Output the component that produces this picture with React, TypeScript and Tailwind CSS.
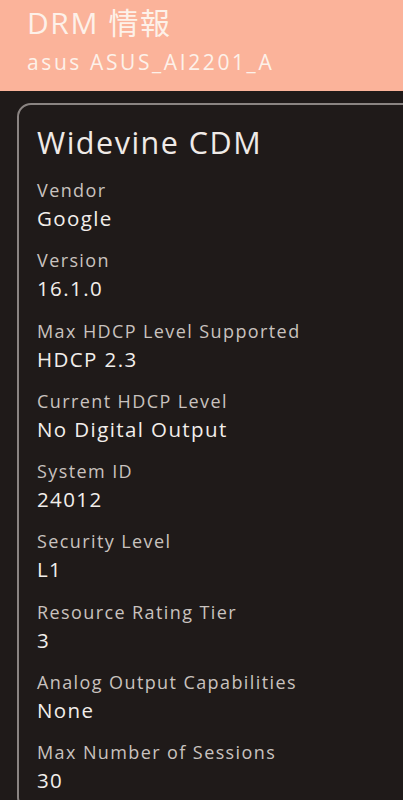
const rows: [string, string][] = [
  ["Vendor", "Google"],
  ["Version", "16.1.0"],
  ["Max HDCP Level Supported", "HDCP 2.3"],
  ["Current HDCP Level", "No Digital Output"],
  ["System ID", "24012"],
  ["Security Level", "L1"],
  ["Resource Rating Tier", "3"],
  ["Analog Output Capabilities", "None"],
  ["Max Number of Sessions", "30"],
];

export default function App() {
  return (
    <div
      className="w-[403px] h-[800px] overflow-hidden bg-[#1f1a19]"
      style={{ fontFamily: '"Open Sans", "Noto Sans CJK JP", sans-serif' }}
    >
      <div className="h-[91px] bg-[#fbb39a] pl-[27px] pt-[4px] text-[#fdf1e9]">
        <h1 className="text-[30px] leading-[38px] tracking-[1.6px]">DRM 情報</h1>
        <p className="mt-[5px] text-[21px] leading-[30px] tracking-[2.6px]">asus ASUS_AI2201_A</p>
      </div>
      <div className="ml-[17px] mt-[12px] w-[430px] rounded-[14px] border-2 border-[#8a8482] pl-[18px] pt-[17px]">
        <h2 className="mb-[14px] text-[30.5px] leading-[40px] tracking-[1.5px] text-[#efeae7]">
          Widevine CDM
        </h2>
        {rows.map(([label, value], i) => (
          <div key={i} className="mb-[13.3px]">
            <p className="text-[18px] leading-[28px] tracking-[1.4px] text-[#c9c2bf]">{label}</p>
            <p className="text-[20.5px] leading-[29px] tracking-[1.4px] text-[#f2eeeb]">{value}</p>
          </div>
        ))}
      </div>
    </div>
  );
}
